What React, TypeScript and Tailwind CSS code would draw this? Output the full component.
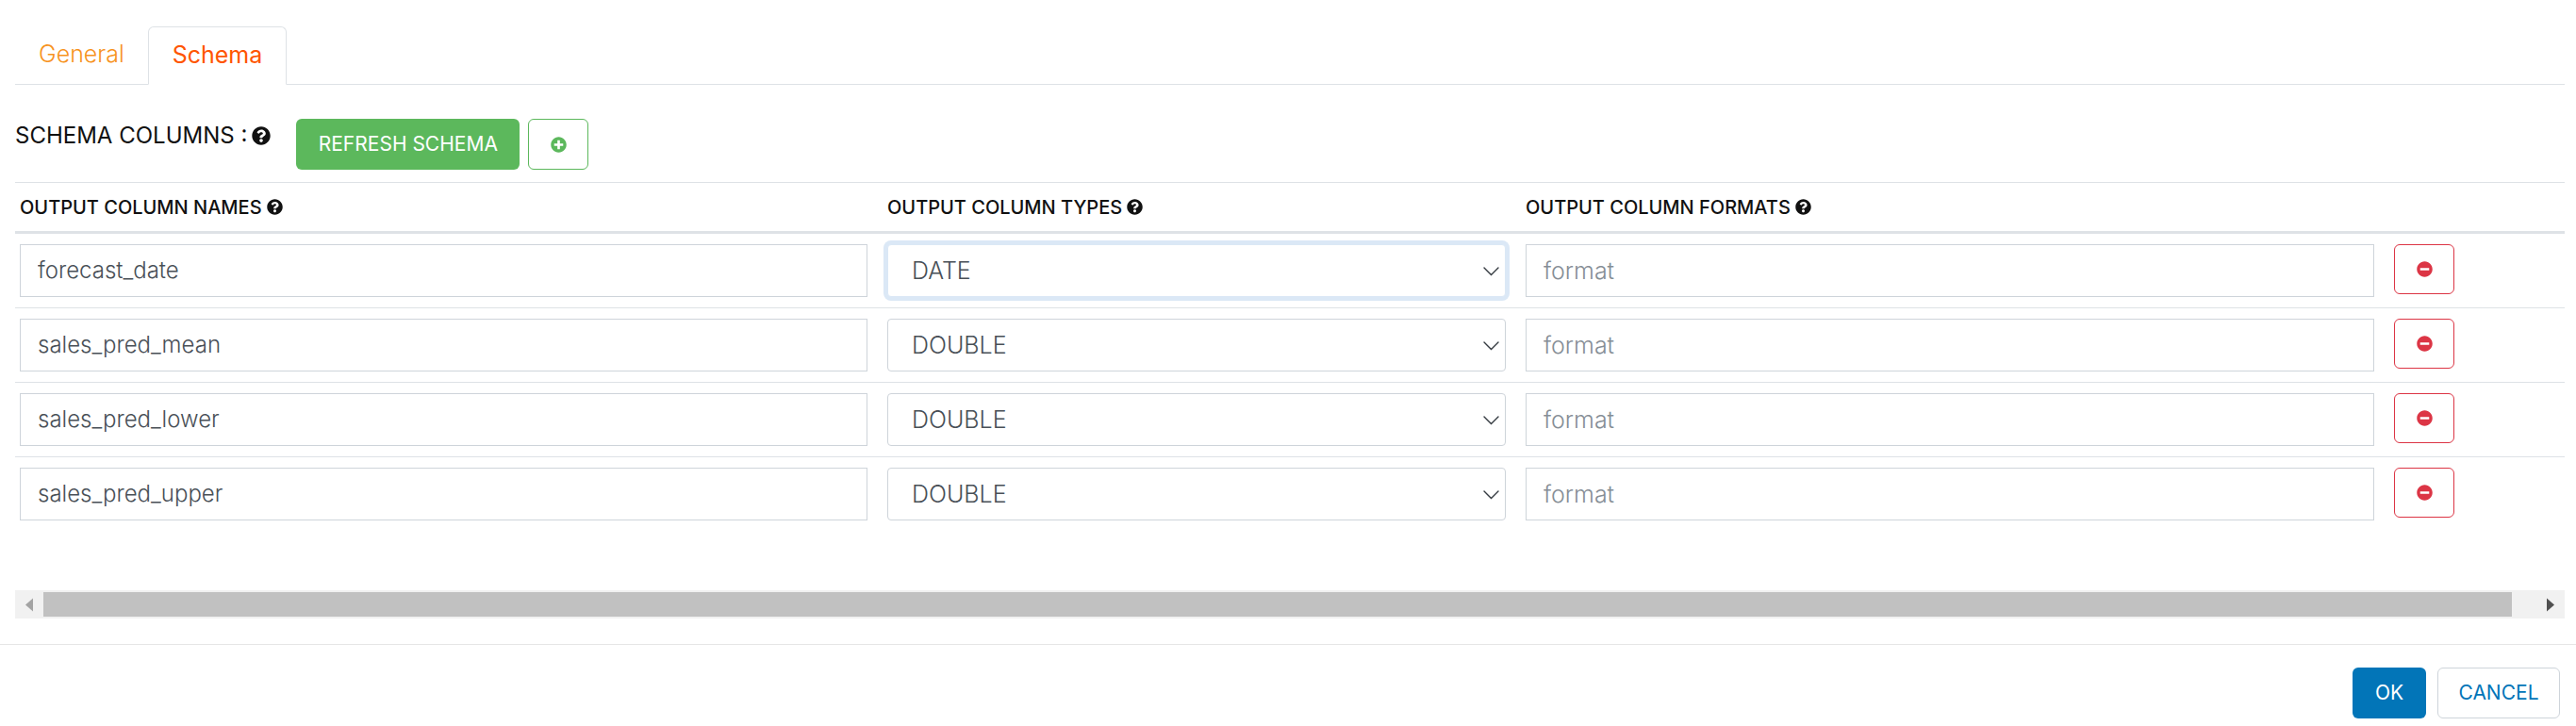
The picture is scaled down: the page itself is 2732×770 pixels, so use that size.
import { FaMinusCircle, FaPlusCircle, FaQuestionCircle } from "react-icons/fa";

const ROWS = [
  { name: "forecast_date", type: "DATE", focused: true },
  { name: "sales_pred_mean", type: "DOUBLE", focused: false },
  { name: "sales_pred_lower", type: "DOUBLE", focused: false },
  { name: "sales_pred_upper", type: "DOUBLE", focused: false },
];

function ColumnHead({ label, width }: { label: string; width: string }) {
  return (
    <div className={`flex items-center gap-[5px] ${width}`}>
      <span className="text-[20px] font-medium text-[#111]">{label}</span>
      <FaQuestionCircle size={17} className="text-[#111]" />
    </div>
  );
}

function Row({ name, type, focused, last }: { name: string; type: string; focused: boolean; last: boolean }) {
  return (
    <div className={`flex h-[79px] items-start pt-[11px] pl-[5px] ${last ? "" : "border-b border-[#dee2e6]"}`}>
      <input
        readOnly
        value={name}
        className="h-[56px] w-[899px] border border-[#ced4da] bg-white px-[18px] pb-px text-[24px] font-light text-[#495057] outline-none"
      />
      <div className="relative ml-[21px] h-[56px] w-[656px]">
        <div
          className={`flex h-full items-center rounded border bg-white px-[25px] pt-px text-[25px] font-light text-[#495057] ${
            focused ? "border-[#dbe8f6] ring-4 ring-[#dbe8f6]" : "border-[#ced4da]"
          }`}
        >
          {type}
        </div>
        <svg
          viewBox="0 0 17 10"
          className="absolute top-[24px] right-[7px] h-[10px] w-[17px] text-[#343a40]"
          fill="none"
          stroke="currentColor"
          strokeWidth="1.4"
          strokeLinecap="round"
        >
          <path d="M1 1l7.5 7.5L16 1" />
        </svg>
      </div>
      <input
        readOnly
        placeholder="format"
        className="ml-[21px] h-[56px] w-[900px] border border-[#ced4da] bg-white px-[18px] text-[25px] font-light text-[#495057] outline-none placeholder:text-[#868e96]"
      />
      <button className="ml-[21px] flex h-[53px] w-[64px] items-center justify-center rounded-md border border-[#dc3545] bg-white text-[#dc3545]">
        <FaMinusCircle size={17} />
      </button>
    </div>
  );
}

export default function App() {
  return (
    <div className="flex h-[770px] flex-col bg-white font-['Inter',sans-serif]">
      <div className="flex-1 pt-[28px] pr-3 pl-4">
        {/* Tabs */}
        <div className="flex h-[62px] border-b border-[#dee2e6]">
          <div className="flex w-[141px] items-center justify-center pb-px text-[25px] font-light text-[#f7931e]">
            General
          </div>
          <div className="-mb-px flex w-[147px] items-center justify-center rounded-t-md border border-[#dee2e6] border-b-white bg-white text-[25px] text-[#ff5500]">
            Schema
          </div>
        </div>

        {/* Schema header */}
        <div className="flex h-[104px] items-start border-b border-[#dee2e6] pt-[36px]">
          <div className="flex h-[36px] items-center gap-[5px]">
            <span className="text-[24px] text-[#111]">SCHEMA COLUMNS :</span>
            <FaQuestionCircle size={20} className="text-[#111]" />
          </div>
          <button className="ml-[27px] h-[54px] w-[237px] rounded-md bg-[#5cb85c] text-[21px] text-white">
            REFRESH SCHEMA
          </button>
          <button className="ml-[9px] flex h-[54px] w-[64px] items-center justify-center rounded-md border border-[#5cb85c] bg-white text-[#5cb85c]">
            <FaPlusCircle size={17} />
          </button>
        </div>

        {/* Column table */}
        <div className="flex h-[54px] items-center border-b-[3px] border-[#dee2e6] pl-[5px]">
          <ColumnHead label="OUTPUT COLUMN NAMES" width="w-[920px]" />
          <ColumnHead label="OUTPUT COLUMN TYPES" width="w-[677px]" />
          <ColumnHead label="OUTPUT COLUMN FORMATS" width="w-[700px]" />
        </div>
        {ROWS.map((row, i) => (
          <Row key={row.name} {...row} last={i === ROWS.length - 1} />
        ))}

        {/* Scrollbar */}
        <div className="mt-[62px] flex h-[30px] items-center bg-[#f1f1f1]">
          <div className="flex h-full w-[30px] items-center justify-center">
            <svg viewBox="0 0 8 14" className="h-[15px] w-[8px] fill-[#a3a3a3]">
              <path d="M8 0v14L0 7z" />
            </svg>
          </div>
          <div className="h-[26px] flex-1 bg-[#c1c1c1]" />
          <div className="flex h-full w-[56px] items-center justify-end pr-[11px]">
            <svg viewBox="0 0 8 14" className="h-[15px] w-[8px] fill-[#505050]">
              <path d="M0 0v14l8-7z" />
            </svg>
          </div>
        </div>
      </div>

      {/* Footer */}
      <div className="flex h-[87px] items-start justify-end gap-3 border-t border-[#e6e6e6] pt-[24px] pr-[17px]">
        <button className="h-[54px] w-[78px] rounded-md bg-[#0275b8] text-[21px] text-white">OK</button>
        <button className="h-[54px] w-[130px] rounded-md border border-[#ced4da] bg-white text-[21px] text-[#0275b8]">
          CANCEL
        </button>
      </div>
    </div>
  );
}
